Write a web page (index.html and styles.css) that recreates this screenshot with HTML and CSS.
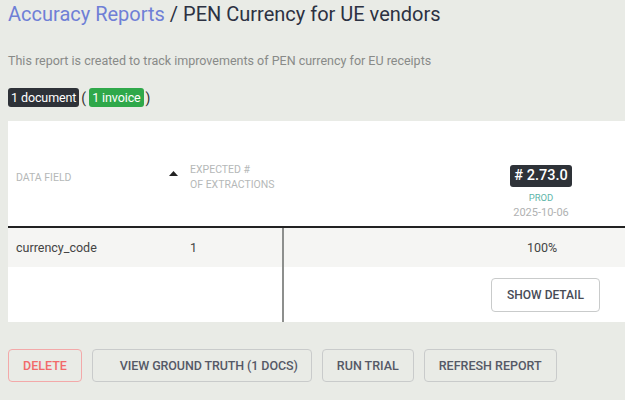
FILE: index.html
```html
<!DOCTYPE html>
<html>
<head>
<meta charset="utf-8">
<link rel="stylesheet" href="styles.css">
</head>
<body>
<div class="page">
  <h1 class="title"><span class="crumb">Accuracy Reports</span> / PEN Currency for UE vendors</h1>
  <p class="desc">This report is created to track improvements of PEN currency for EU receipts</p>
  <div class="badges">
    <span class="badge dark">1 document</span><span class="paren">(</span><span class="badge green">1 invoice</span><span class="paren">)</span>
  </div>
  <div class="card">
    <div class="grid">
      <div class="th c1">Data field</div>
      <div class="th c2">
        <svg class="sort" width="9" height="5" viewBox="0 0 9 5"><path d="M0 5 L4.5 0 L9 5 Z" fill="#222"/></svg>
        <span>Expected #<br>of extractions</span>
      </div>
      <div class="th c3">
        <span class="ver"># 2.73.0</span>
        <span class="env">PROD</span>
        <span class="date">2025-10-06</span>
      </div>
      <div class="td c1 shade">currency_code</div>
      <div class="td c2 shade num">1</div>
      <div class="td c3 shade split">100%</div>
      <div class="td c1 tall"></div>
      <div class="td c2 tall"></div>
      <div class="td c3 tall split"><button class="btn detail">Show detail</button></div>
    </div>
  </div>
  <div class="actions">
    <button class="btn danger">Delete</button>
    <button class="btn wide">View ground truth (1 docs)</button>
    <button class="btn">Run trial</button>
    <button class="btn">Refresh report</button>
  </div>
</div>
</body>
</html>
```
FILE: styles.css
```css
*, *::before, *::after { box-sizing: border-box; }
html, body {
  margin: 0;
  padding: 0;
  background: #e9ebe6;
  overflow: hidden;
}
.page {
  padding: 0 0 0 8px;
  font-family: Roboto, "Liberation Sans", sans-serif;
  color: #333;
  width: 800px;
}
.title {
  margin: 0;
  padding-top: 1px;
  font-family: Roboto, sans-serif;
  font-weight: 400;
  font-size: 20px;
  line-height: 26px;
  color: #2c3142;
}
.crumb {
  color: #6f7fd6;
}
.desc {
  margin: 27px 0 0 0;
  font-size: 12.5px;
  line-height: 14px;
  color: #888a88;
}
.badges {
  margin-top: 20px;
  display: flex;
  align-items: center;
  height: 19px;
}
.badge {
  font-size: 12.5px;
  line-height: 19px;
  padding: 0 3px;
  border-radius: 3px;
  color: #fff;
  letter-spacing: -0.1px;
}
.badge.dark { background: #2e3238; }
.badge.green { background: #2fa84a; }
.paren {
  font-size: 14px;
  color: #333;
  margin: 0 3px 0 2px;
}
.card {
  margin-top: 14px;
  background: #fff;
  width: 792px;
}
.grid {
  display: grid;
  grid-template-columns: 158px 116px 1fr;
}
.th {
  height: 107px;
  border-bottom: 2px solid #222;
  font-size: 10.5px;
  color: #b5b8b8;
  text-transform: uppercase;
  display: flex;
  align-items: center;
}
.c1 { padding-left: 8px; }
.th.c1 { padding-top: 7px; }
.th.c2 { padding-left: 3px; padding-top: 6px; line-height: 15px; }
.sort { margin-top: -6px; margin-right: 12px; }
.th.c3 {
  flex-direction: column;
  justify-content: flex-end;
  padding-bottom: 7px;
}
.ver {
  background: #2e3238;
  color: #fff;
  font-size: 14.5px;
  font-weight: 500;
  line-height: 22px;
  padding: 0 4px;
  border-radius: 3px;
  text-transform: none;
}
.env {
  color: #5db5a8;
  font-size: 9.5px;
  margin-top: 5px;
}
.date {
  color: #b0b2b2;
  font-size: 11px;
  margin-top: 3px;
}
.td {
  font-size: 12.5px;
  color: #444;
  display: flex;
  align-items: center;
}
.shade { background: #f5f5f3; height: 39px; }
.num { padding-left: 24px; }
.td.c3 { justify-content: center; }
.split { border-left: 2px solid #8d8f8d; }
.tall { height: 55px; }
.btn {
  font-family: Roboto, "Liberation Sans", sans-serif;
  background: transparent;
  border: 1px solid #c9cbcb;
  border-radius: 4px;
  color: #555966;
  font-size: 12.5px;
  font-weight: 500;
  text-transform: uppercase;
  white-space: nowrap;
  height: 33px;
  padding: 0 14px;
  cursor: pointer;
}
.btn.detail {
  background: #fff;
  height: 34px;
  padding: 0 15px;
  margin-left: 7px;
  color: #474b56;
  font-size: 12px;
}
.actions {
  margin-top: 27px;
  display: flex;
  gap: 10px;
}
.btn.danger {
  color: #f26a6a;
  border-color: #f3a9a9;
}
.btn.wide {
  width: 220px;
  padding: 0 0 0 27px;
  text-align: left;
  letter-spacing: -0.1px;
}
```
